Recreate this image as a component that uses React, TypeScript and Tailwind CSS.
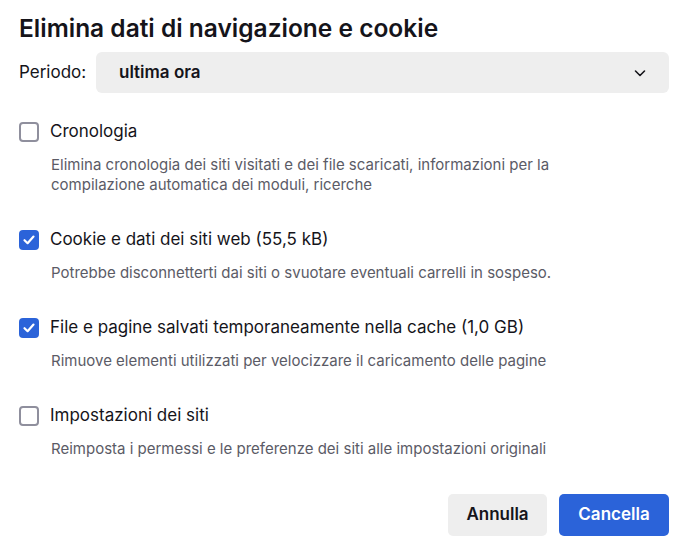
import React from 'react';

interface Option {
  label: string;
  description: string[];
  checked: boolean;
}

const options: Option[] = [
  {
    label: 'Cronologia',
    description: [
      'Elimina cronologia dei siti visitati e dei file scaricati, informazioni per la',
      'compilazione automatica dei moduli, ricerche',
    ],
    checked: false,
  },
  {
    label: 'Cookie e dati dei siti web (55,5 kB)',
    description: ['Potrebbe disconnetterti dai siti o svuotare eventuali carrelli in sospeso.'],
    checked: true,
  },
  {
    label: 'File e pagine salvati temporaneamente nella cache (1,0 GB)',
    description: ['Rimuove elementi utilizzati per velocizzare il caricamento delle pagine'],
    checked: true,
  },
  {
    label: 'Impostazioni dei siti',
    description: ['Reimposta i permessi e le preferenze dei siti alle impostazioni originali'],
    checked: false,
  },
];

const Checkbox: React.FC<{ checked: boolean }> = ({ checked }) =>
  checked ? (
    <div className="w-5 h-5 rounded-[4px] bg-[#2b63d9] flex items-center justify-center shrink-0">
      <svg width="14" height="14" viewBox="0 0 14 14" fill="none">
        <path d="M2.5 7.2 L5.6 10.2 L11.5 3.6" stroke="white" strokeWidth="2.2" strokeLinecap="round" strokeLinejoin="round" />
      </svg>
    </div>
  ) : (
    <div className="w-5 h-5 rounded-[4px] border-2 border-[#8f8f9d] bg-white shrink-0" />
  );

export default function App() {
  return (
    <div className="w-[687px] h-[552px] bg-white text-[#15141a] font-['Inter',sans-serif] pl-[19px] pr-[18px] pt-[12px]">
      <h1 className="text-[24.5px] leading-[32px] font-semibold">
        Elimina dati di navigazione e cookie
      </h1>

      <div className="flex items-center mt-[8px]">
        <span className="text-[17px] w-[77px]">Periodo:</span>
        <div className="flex-1 h-[41px] rounded-[6px] bg-[#eeeeee] flex items-center justify-between pl-[23px] pr-[22px]">
          <span className="text-[17px] font-semibold">ultima ora</span>
          <svg width="14" height="14" viewBox="0 0 14 14" fill="none">
            <path d="M2.5 5 L7 9.5 L11.5 5" stroke="#15141a" strokeWidth="1.6" strokeLinecap="round" strokeLinejoin="round" />
          </svg>
        </div>
      </div>

      <div className="flex flex-col mt-[19px] gap-[25px]">
        {options.map(opt => (
          <div key={opt.label}>
            <div className="flex items-center gap-[11px] h-[40px]">
              <Checkbox checked={opt.checked} />
              <span className="text-[17px]">{opt.label}</span>
            </div>
            <div className="pl-[32px] mt-[3px] text-[15px] leading-[20px] text-[#5b5b66]">
              {opt.description.map(line => (
                <div key={line}>{line}</div>
              ))}
            </div>
          </div>
        ))}
      </div>

      <div className="flex justify-end gap-[12px] mt-[35px]">
        <button className="w-[99px] h-[42px] rounded-[5px] bg-[#eeeeee] text-[17px] font-semibold text-[#15141a]">
          Annulla
        </button>
        <button className="w-[110px] h-[42px] rounded-[5px] bg-[#2b63d9] text-[17px] font-semibold text-white">
          Cancella
        </button>
      </div>
    </div>
  );
}
